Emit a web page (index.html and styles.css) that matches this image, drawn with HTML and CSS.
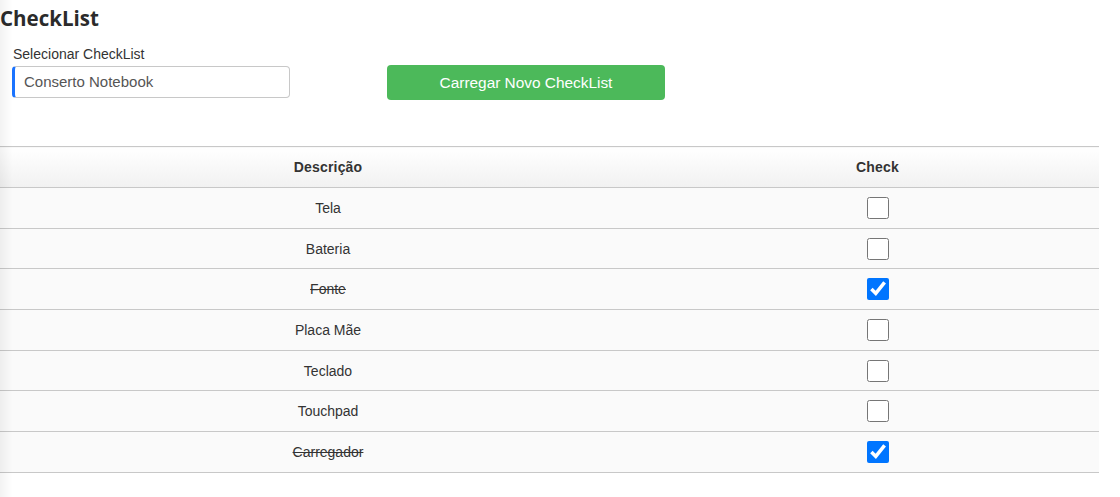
FILE: index.html
```html
<!DOCTYPE html>
<html lang="pt-BR">
<head>
<meta charset="utf-8">
<title>CheckList</title>
<link rel="stylesheet" href="styles.css">
</head>
<body>
<div class="page">
  <h1 class="title">CheckList</h1>
  <div class="form-row">
    <div class="field">
      <label class="label" for="sel">Selecionar CheckList</label>
      <div class="input" id="sel">Conserto Notebook</div>
    </div>
    <button class="btn" type="button">Carregar Novo CheckList</button>
  </div>
  <table class="grid">
    <thead>
      <tr><th class="col-desc">Descrição</th><th>Check</th></tr>
    </thead>
    <tbody>
      <tr><td>Tela</td><td><input type="checkbox" class="chk"></td></tr>
      <tr><td>Bateria</td><td><input type="checkbox" class="chk"></td></tr>
      <tr><td class="done">Fonte</td><td><input type="checkbox" class="chk" checked></td></tr>
      <tr><td>Placa Mãe</td><td><input type="checkbox" class="chk"></td></tr>
      <tr><td>Teclado</td><td><input type="checkbox" class="chk"></td></tr>
      <tr><td>Touchpad</td><td><input type="checkbox" class="chk"></td></tr>
      <tr><td class="done">Carregador</td><td><input type="checkbox" class="chk" checked></td></tr>
    </tbody>
  </table>
</div>
</body>
</html>
```
FILE: styles.css
```css
html, body {
  margin: 0;
  padding: 0;
  background: #ffffff;
}
body {
  font-family: "Liberation Sans", Arial, sans-serif;
  color: #333;
}
body::before {
  content: "";
  position: fixed;
  left: 0;
  top: 0;
  bottom: 0;
  width: 12px;
  background: linear-gradient(to right, rgba(0,0,0,0.05), rgba(0,0,0,0));
  pointer-events: none;
  z-index: 5;
}
.page {
  width: 1099px;
}
.title {
  font-family: "Open Sans", sans-serif;
  font-weight: 700;
  font-size: 20.5px;
  line-height: 24px;
  margin: 6px 0 0 0;
  color: #2b2b2b;
}
.form-row {
  display: flex;
  align-items: flex-end;
  gap: 97px;
  padding-left: 12px;
  margin-top: 15px;
}
.field {
  display: flex;
  flex-direction: column;
  width: 278px;
}
.label {
  font-size: 14px;
  line-height: 18px;
  color: #333;
  padding-left: 1px;
  margin-bottom: 3px;
}
.input {
  box-sizing: border-box;
  height: 32px;
  border: 1px solid #c8c8c8;
  border-left: 3px solid #1a73ff;
  border-radius: 4px;
  font-size: 15px;
  line-height: 30px;
  color: #555;
  padding-left: 9px;
}
.btn {
  width: 278px;
  height: 35px;
  margin-bottom: -2px;
  border: none;
  border-radius: 4px;
  background: #4cb95a;
  color: #fff;
  font-family: "Liberation Sans", Arial, sans-serif;
  font-size: 15.4px;
}
.grid {
  margin-top: 48px;
  width: 1099px;
  border-collapse: collapse;
  font-size: 14px;
}
.grid th {
  height: 40px;
  padding: 0;
  font-weight: 700;
  font-size: 14px;
  letter-spacing: 0.2px;
  color: #333;
  background: linear-gradient(to bottom, #ffffff, #f1f1f1);
  border-top: 1px solid #c8c8c8;
  border-bottom: 1px solid #c8c8c8;
  text-align: center;
}
.col-desc {
  width: 656px;
}
.grid td {
  height: 39.7px;
  padding: 0;
  text-align: center;
  background: #fafafa;
  border-bottom: 1px solid #c8c8c8;
  color: #333;
  vertical-align: middle;
}
.done {
  text-decoration: line-through;
}
.chk {
  width: 22px;
  height: 22px;
  margin: 0;
  vertical-align: middle;
}
```
